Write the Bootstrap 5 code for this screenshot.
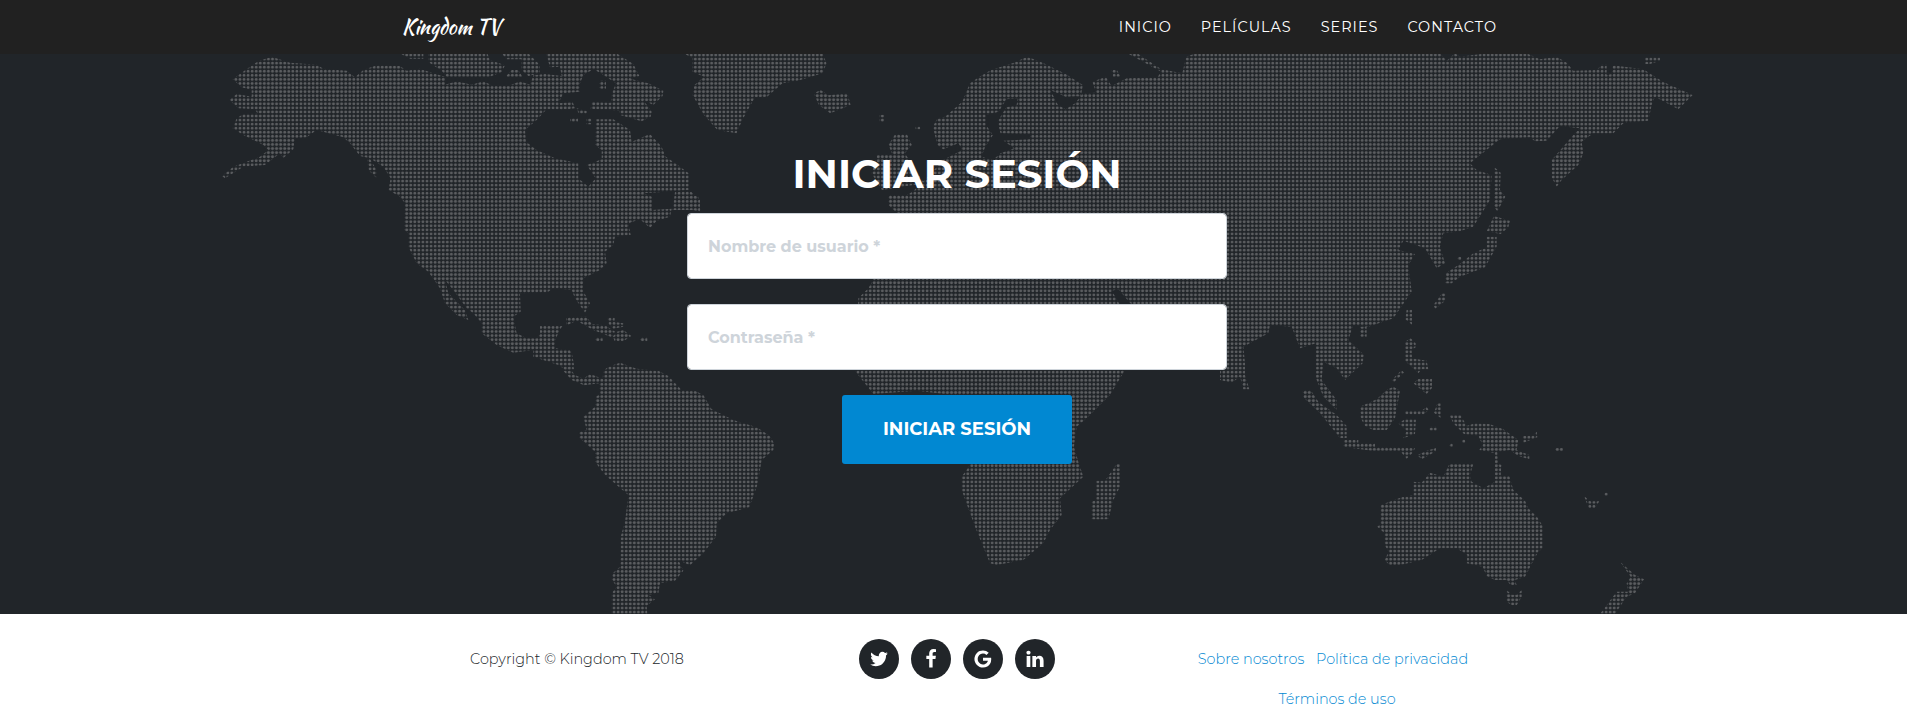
<!DOCTYPE html>
<html lang="es">
<head>
<meta charset="utf-8">
<meta name="viewport" content="width=device-width, initial-scale=1">
<title>Kingdom TV</title>
<link href="https://cdn.jsdelivr.net/npm/bootstrap@5.3.0/dist/css/bootstrap.min.css" rel="stylesheet">
<style>
  body { font-family: Montserrat, Inter, "Open Sans", sans-serif; color: #212529; overflow-x: hidden; }
  .site-band { padding-left: 7px; }
  .site-band > .container { max-width: 1140px; padding: 0 15px; }
  .site-nav { background: #212121; min-height: 54px; padding-top: 0; padding-bottom: 0; }
  .site-brand { font: 400 20px/32px "Kaushan Script", Lato, cursive; color: #fff; margin: 0; padding: 0; }
  .site-brand:hover { color: #fff; }
  .site-links { gap: 29px; padding-right: 15px; }
  .site-links .nav-link { font-size: 90%; line-height: 24px; letter-spacing: 1px; color: #fff; padding: 0; }
  .login { background: #212529; padding-top: 96px; padding-bottom: 150px; }
  .login-form { width: 540px; max-width: 100%; }
  .login h1 { font-size: 40px; line-height: 48px; font-weight: 700; margin-bottom: 15px; }
  .login .form-control { height: 66px; padding: 20px; font-weight: 700; font-size: 16px; border-radius: 4px; margin-bottom: 25px; border-color: #ced4da; }
  .login .form-control::placeholder { color: #ced4da; }
  .btn-login { background: #0188d2; color: #fff; font-size: 18px; line-height: 27px; font-weight: 700; padding: 21px 0; width: 230px; border: 0; border-radius: 3px; }
  .btn-login:hover { background: #0173b1; color: #fff; }
  .site-foot { background: #fff; padding-top: 25px; font-size: 90%; line-height: 40px; font-weight: 300; }
  .site-foot .row { --bs-gutter-x: 30px; }
  .social { gap: 12px; }
  .social a { width: 40px; height: 40px; background: #212529; color: #fff; }
  .legal a { color: #0188d2; text-decoration: none; }
</style>
</head>
<body>
<nav class="navbar site-nav site-band" aria-label="Principal">
  <div class="container">
    <a class="navbar-brand site-brand" href="#">Kingdom TV</a>
    <ul class="nav site-links">
      <li><a class="nav-link" href="#">INICIO</a></li>
      <li><a class="nav-link" href="#">PELÍCULAS</a></li>
      <li><a class="nav-link" href="#">SERIES</a></li>
      <li><a class="nav-link" href="#">CONTACTO</a></li>
    </ul>
  </div>
</nav>

<main class="login site-band position-relative overflow-hidden">
  <!-- Dotted world map: a dot grid shown only where there is land -->
  <svg class="position-absolute top-0 start-0 w-100 h-100" viewBox="0 54 1907 560" preserveAspectRatio="xMidYMid slice" aria-hidden="true">
    <defs>
      <pattern id="dots" patternUnits="userSpaceOnUse" x="221.67" y="52.97" width="4.066" height="4.066">
        <circle cx="2.033" cy="2.033" r="1.45" fill="#5c5e61"/>
      </pattern>
      <mask id="land" maskUnits="userSpaceOnUse" x="0" y="54" width="1907" height="560">
        <g fill="#fff" fill-rule="evenodd">
          <!-- North America -->
          <g transform="translate(200 50) scale(.33333)">
            <path d="M98,88 125,68 150,50 175,34 215,20 270,38 350,44 370,56 440,62 465,82 490,60 530,46 600,48 620,62 660,56 700,70 735,80 735,104 770,94 815,104 850,94 880,108 925,108 960,94 990,104 1000,76 1035,72 1085,78 1080,50 1050,52 1038,10 1250,10 1300,42 1318,78 1290,86 1345,100 1390,122 1388,138 1360,165 1330,150 1355,185 1352,200 1325,214 1260,195 1258,182 1172,176 1176,155 1232,158 1236,130 1248,100 1200,68 1180,58 1150,75 1138,105 1140,125 1090,130 1075,160 1118,156 1125,175 1085,180 1040,178 1010,210 975,240 978,275 1010,300 1065,325 1135,340 1135,385 1165,410 1187,385 1160,345 1205,328 1205,300 1185,285 1188,208 1240,208 1290,240 1295,275 1350,252 1385,290 1400,330 1462,375 1465,410 1440,422 1330,430 1355,440 1355,480 1415,476 1410,500 1370,512 1350,534 1320,508 1285,520 1292,555 1245,560 1240,585 1215,605 1220,640 1200,660 1150,685 1148,720 1170,760 1155,788 1125,745 1115,720 1060,715 1040,728 960,730 962,785 940,800 950,850 980,865 1010,865 1040,828 1085,828 1070,860 1058,895 1110,900 1122,958 1100,962 1075,945 1000,920 1000,900 940,908 890,885 845,850 845,820 820,790 800,775 760,720 735,690 745,730 770,755 795,780 805,810 770,795 735,760 720,715 685,665 650,640 625,590 625,550 612,540 615,460 600,440 565,420 572,385 550,350 510,325 480,318 450,280 430,262 350,240 320,262 285,265 280,298 250,324 240,310 195,345 130,350 75,385 66,378 100,350 180,320 205,300 190,285 130,255 98,235 110,205 130,192 172,190 165,178 115,175 88,150 110,132 155,140 155,120 125,112Z"/>
            <path d="M600,10H670V26H630ZM685,10H862L870,30 915,46 905,66 870,80H740L725,62 685,36ZM905,10H985L1020,45 1020,70 985,78 965,60 965,28H920ZM935,60h20l12,20h-50ZM1198,92h20v24h-20ZM500,310l30,50v25l-25,-25ZM622,430l20,10v12h-20ZM1110,204h24v12h-24ZM1160,205h14v18h-14ZM1130,175l30,8v8h-24ZM1425,425 1470,422 1500,450V485L1420,465ZM1098,802 1160,800 1175,822 1215,826 1250,848 1235,862 1180,840 1130,812 1100,826ZM1222,802h22v14l26,4v10l-30,6-14,-14ZM1235,850 1270,840 1294,858 1270,874H1244ZM1186,862h22v12h-22ZM1320,862h22v12h-22Z"/>
          </g>
          <!-- Central and South America -->
          <g transform="translate(540 300) scale(.33333)">
            <path d="M0,78H68L45,105V145L95,155 102,195 85,200 105,225 130,236 150,222 188,236 190,212 205,200 240,188 290,206 355,212 385,228 425,270 465,272 490,285 515,328 580,360 650,382 690,408 702,430 700,450 665,480 652,555 628,622 560,640 530,670 528,710 490,760 450,796 415,780 430,812 405,842 360,850 355,880 325,885 345,898 320,918 322,942H215V880L230,860 215,838 218,820 240,800 242,710 255,665 265,585 195,525 165,485 165,455 117,412V395L140,390 130,350 165,320 168,290 180,282 178,250 132,256 95,240 70,212 80,200 55,190 0,175Z"/>
          </g>
          <!-- Greenland, Iceland, British Isles and northern Europe -->
          <g transform="translate(660 50) scale(.38265 .33333)">
            <path d="M62,10H425L435,40 425,70 360,92 320,100 280,140 248,142 215,210 200,250 150,240 115,195 85,135 90,105 115,80 85,65V24ZM402,130 420,120 440,136 490,130 498,165 445,190 415,165ZM574,194h12v22h-12ZM668,228h12v10h-12ZM615,252H645L658,285 640,310 690,400 580,420 553,370 568,315 608,315 597,285ZM32,480 45,425 100,440 105,480Z"/>
            <path d="M0,308 40,340 75,370V420L0,425Z"/>
            <path d="M713,230 725,205 745,200 790,155 810,100 835,80 865,60 925,38 960,20 1000,38 1060,72 1105,105 1100,138 1060,140 1020,120 1040,165 1060,178 1085,160 1105,130 1140,128 1130,95 1165,80 1180,108 1220,85 1300,82 1310,65 1225,12H1250L1310,58 1365,70 1375,20 1400,10H1600V500H630L597,465V435H645L660,425 700,380 740,330 790,300 780,280 740,298 725,285ZM905,148 935,145 932,165 905,172 882,215 890,250 970,252 965,268 898,272 925,295 890,310 870,330 840,320 850,290 870,255 852,225 852,195 885,185Z"/>
            <path d="M1180,60h14l10,20h-20Z"/>
          </g>
          <!-- Africa, Arabia and Madagascar -->
          <g transform="translate(820 270) scale(.33333)">
            <path d="M165,20H1260V104H935L895,58 875,62 900,104 912,305 870,375 800,445 770,470 762,530 775,575 790,620 720,685 725,735 690,780 670,820 610,870 530,885 510,880 465,770 425,660V620L450,585 400,375 290,362 160,372 105,303 115,85 145,55ZM890,582h10V650L880,690 865,748H815V695L828,690V632H855Z"/>
          </g>
          <!-- Asia and Japan -->
          <g transform="translate(1240 50) scale(.33333)">
            <path d="M-60,10H600L620,32 645,10 660,20 740,10H860L900,28 950,20 980,38 1000,62 1070,60 1085,44H1100V75L1115,72 1118,46 1210,58 1270,96 1358,135 1315,178 1245,140 1235,165 1225,212 1150,220 1120,250 1060,250 1025,275 1030,310 1015,345 965,390 950,410 935,382V330L1000,255 1020,235 960,228 920,272 885,274 870,262 780,268 690,340 710,360 755,375 750,450 700,530 655,545 610,550 600,590 615,640 590,655 555,595 490,572 475,600 525,612 505,645 515,725 460,805 385,830 340,825 325,870 372,915 368,940 315,990 290,955 250,935 245,990 290,1050V1080L250,1040 228,985V880L180,895 155,830 90,825 85,850 10,890 15,940V975L28,1018 10,1018 0,980 -25,998 -60,990ZM360,830h20v30h-20ZM500,778h16v46l-20,-16ZM762,350 782,368 780,420 796,440 772,484 762,470ZM762,498 810,512 805,532 782,552 740,544ZM740,560H770V590L735,652 660,680 635,700H615L618,670 655,645 700,610 740,592ZM652,620h12v10h-12ZM606,730h10v22l-30,24-6,-10ZM1215,22H1260V32L1230,42H1215Z"/>
          </g>
          <!-- South-east Asia and Oceania -->
          <g transform="translate(1240 300) scale(.33333)">
            <path d="M188,270H212L235,305 290,345 320,378V414H300L240,340 190,292ZM312,420H355V430H405V442H480L525,444 520,456 500,476 480,452H395L310,440ZM532,466 560,452 588,444V454L545,478ZM360,320 410,298 440,270 460,260 480,272 465,355 440,390H400L375,378 360,350ZM455,240 485,210 492,218 462,246ZM495,125 512,115 527,130V142L515,150 516,175 560,182 565,208H545L535,220 495,182ZM520,250 535,236H576V264L560,282ZM495,332H545L560,320 566,330 550,344H495ZM592,310h10v44l-20,-16ZM475,370 500,355 528,358 525,402 490,415 500,392ZM568,380h22v12h-22ZM628,345H662L680,378 705,370 748,372 790,388 835,420 830,450 868,465V478L835,468 810,450 772,456 774,490 784,495 782,528H808L820,570 855,602 865,625 892,652 908,678V745L895,755 880,782 855,830 825,840 830,856H812L800,840H765L740,828 728,800 680,790 682,765 650,745H600L545,780 480,795H448L434,780 446,755 434,735V700L412,680 422,672V615L485,592 520,585V545L545,548 570,518 610,530 628,492H700L690,525 695,545 730,565 765,545V460L718,450 728,435 715,408 672,402 640,370ZM848,408 880,406 890,394 892,412 850,428ZM800,870 815,884H830L845,870V890L830,916H815L800,905ZM1140,785 1185,825 1212,838 1185,880 1160,890 1125,942H1080L1130,875H1165L1160,850 1172,830ZM945,444h24v10h-24ZM1092,576h12v12h-12ZM1032,588 1050,604H1078L1065,624H1046ZM628,430h10v10h-10ZM666,418h10v10h-10Z"/>
          </g>
        </g>
      </mask>
    </defs>
    <rect x="0" y="54" width="1907" height="560" fill="url(#dots)" mask="url(#land)"/>
  </svg>
  <div class="container position-relative">
    <form class="login-form mx-auto text-center">
      <h1 class="text-white">INICIAR SESIÓN</h1>
      <label class="visually-hidden" for="user">Nombre de usuario</label>
      <input class="form-control" id="user" type="text" placeholder="Nombre de usuario *">
      <label class="visually-hidden" for="pass">Contraseña</label>
      <input class="form-control" id="pass" type="password" placeholder="Contraseña *">
      <button class="btn btn-login" type="submit">INICIAR SESIÓN</button>
    </form>
  </div>
</main>

<footer class="site-foot site-band">
  <div class="container">
    <div class="row text-center">
      <div class="col-md-4">Copyright © Kingdom TV 2018</div>
      <div class="col-md-4 d-flex justify-content-center align-items-start social">
        <a class="rounded-circle d-flex align-items-center justify-content-center" href="#" aria-label="Twitter"><svg width="20" height="20" viewBox="0 0 1792 1792" fill="currentColor"><path d="M1684 408q-67 98-162 167 1 14 1 42 0 130-38 259.500t-115.500 248.500-184.500 210.500-258 146-323 54.500q-271 0-496-145 35 4 78 4 225 0 401-138-105-2-188-64.500t-114-159.500q33 5 61 5 43 0 85-11-112-23-185.500-111.500t-73.500-205.500v-4q68 38 146 41-66-44-105-115t-39-154q0-88 44-163 121 149 294.500 238.500t371.500 99.500q-8-38-8-74 0-134 94.500-228.500t228.500-94.500q140 0 236 102 109-21 205-78-37 115-142 178 93-10 186-50z"/></svg></a>
        <a class="rounded-circle d-flex align-items-center justify-content-center" href="#" aria-label="Facebook"><svg width="20" height="20" viewBox="0 0 1792 1792" fill="currentColor"><path d="M1343 12v264h-157q-86 0-116 36t-30 108v189h293l-39 296h-254v759h-306v-759h-255v-296h255v-218q0-186 104-288.500t277-102.500q147 0 228 12z"/></svg></a>
        <a class="rounded-circle d-flex align-items-center justify-content-center" href="#" aria-label="Google"><svg width="20" height="20" viewBox="0 0 1792 1792" fill="currentColor"><path d="M896 786h725q12 67 12 128 0 217-91 387.500t-259.500 266.500-386.500 96q-157 0-299-60.500t-245-163.500-163.500-245-60.500-299 60.500-299 163.500-245 245-163.500 299-60.500q300 0 515 201l-209 201q-123-119-306-119-129 0-238.500 65t-173.500 176.500-64 243.500 64 243.500 173.500 176.500 238.500 65q87 0 160-24t120-60 82-82 51.500-87 22.500-78h-436v-264z"/></svg></a>
        <a class="rounded-circle d-flex align-items-center justify-content-center" href="#" aria-label="LinkedIn"><svg width="20" height="20" viewBox="0 0 1792 1792" fill="currentColor"><path d="M477 625v991h-330v-991h330zm21-306q1 73-50.500 122t-135.500 49h-2q-82 0-132-49t-50-122q0-74 51.500-122.500t134.500-48.500 133 48.500 51 122.500zm1166 729v568h-329v-530q0-105-40.500-164.500t-126.500-59.500q-63 0-105.500 34.500t-63.500 85.500q-11 30-11 81v553h-329q2-399 2-647t-1-296l-1-48h329v144h-2q20-32 41-56t56.500-52 87-43.500 114.500-15.500q171 0 275 113.500t104 332.500z"/></svg></a>
      </div>
      <div class="col-md-4">
        <ul class="list-inline mb-0 legal">
          <li class="list-inline-item"><a href="#">Sobre nosotros</a></li>
          <li class="list-inline-item"><a href="#">Política de privacidad</a></li>
          <li class="list-inline-item"><a href="#">Términos de uso</a></li>
        </ul>
      </div>
    </div>
  </div>
</footer>
<script src="https://cdn.jsdelivr.net/npm/bootstrap@5.3.0/dist/js/bootstrap.bundle.min.js"></script>
</body>
</html>
